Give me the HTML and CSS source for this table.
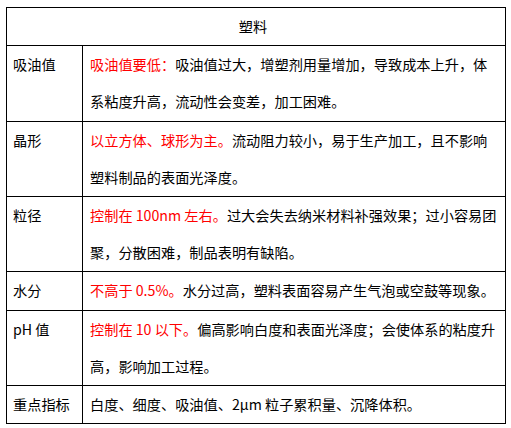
FILE: index.html
```html
<!DOCTYPE html>
<html lang="zh-CN">
<head>
<meta charset="utf-8">
<link rel="stylesheet" href="styles.css">
</head>
<body>
<table class="spec">
  <colgroup><col class="c1"><col class="c2"></colgroup>
  <tr><th colspan="2" class="head">塑料</th></tr>
  <tr>
    <td class="name">吸油值</td>
    <td class="desc"><span class="hl">吸油值要低：</span>吸油值过大，增塑剂用量增加，导致成本上升，体系粘度升高，流动性会变差，加工困难。</td>
  </tr>
  <tr>
    <td class="name">晶形</td>
    <td class="desc"><span class="hl">以立方体、球形为主。</span>流动阻力较小，易于生产加工，且不影响塑料制品的表面光泽度。</td>
  </tr>
  <tr>
    <td class="name">粒径</td>
    <td class="desc"><span class="hl">控制在 100nm 左右。</span>过大会失去纳米材料补强效果；过小容易团聚，分散困难，制品表明有缺陷。</td>
  </tr>
  <tr>
    <td class="name">水分</td>
    <td class="desc"><span class="hl">不高于 0.5%。</span>水分过高，塑料表面容易产生气泡或空鼓等现象。</td>
  </tr>
  <tr>
    <td class="name">pH 值</td>
    <td class="desc"><span class="hl">控制在 10 以下。</span>偏高影响白度和表面光泽度；会使体系的粘度升高，影响加工过程。</td>
  </tr>
  <tr>
    <td class="name">重点指标</td>
    <td class="desc">白度、细度、吸油值、2μm 粒子累积量、沉降体积。</td>
  </tr>
</table>
</body>
</html>
```
FILE: styles.css
```css
html, body {
  margin: 0;
  background: #ffffff;
}
body {
  padding: 7px 6px;
  font-family: "Noto Sans CJK SC", "Noto Sans", sans-serif;
  font-size: 14.2px;
  color: #000000;
}
.spec {
  border-collapse: collapse;
  width: 500px;
  table-layout: fixed;
}
.c1 {
  width: 76px;
}
.spec th,
.spec td {
  border: 1px solid #000000;
  padding: 0 6px;
  line-height: 37.2px;
  vertical-align: top;
  text-align: left;
}
.spec .head {
  font-weight: normal;
  text-align: center;
  padding-right: 12px;
}
.spec .desc {
  padding-left: 7px;
}
.hl {
  color: #ff0000;
}
```
